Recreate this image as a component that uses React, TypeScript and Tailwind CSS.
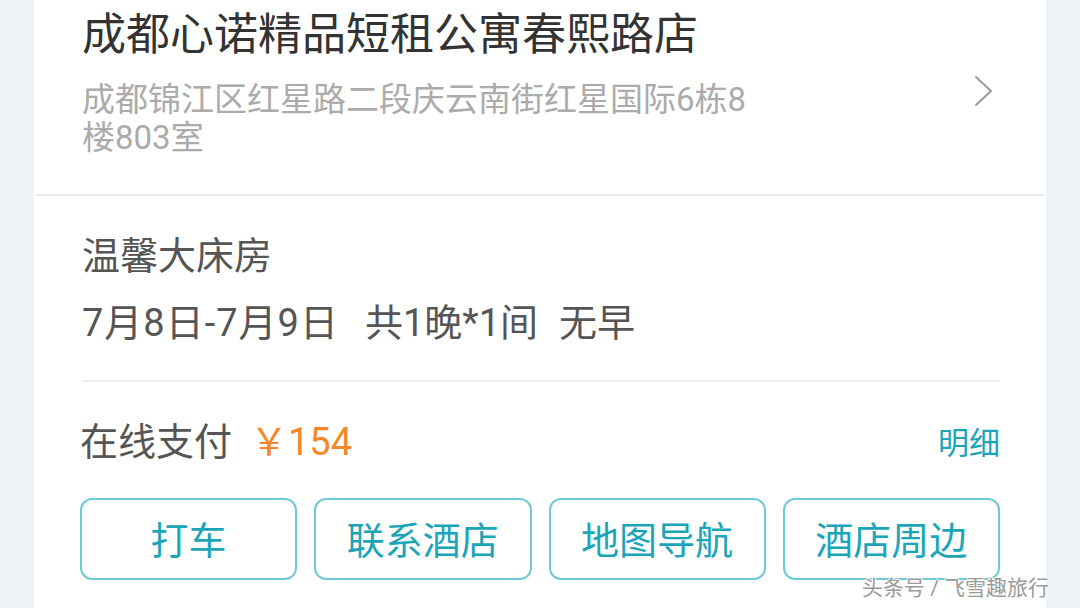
import React from "react";

const font = { fontFamily: "Roboto, 'Noto Sans CJK SC', sans-serif" };

export default function App() {
  const buttons = ["打车", "联系酒店", "地图导航", "酒店周边"];
  return (
    <div
      className="w-[1080px] h-[608px] bg-[#eef3f7] overflow-hidden relative"
      style={font}
    >
      <div className="ml-[34px] w-[1012px] h-[608px] bg-white flex flex-col">
        {/* Section 1 */}
        <div className="flex flex-row pl-[48px] pr-[46px] pt-[9px] pb-[37px]">
          <div className="flex-1 flex flex-col">
            <div className="text-[44px] leading-[52px] text-[#333333] whitespace-nowrap">
              成都心诺精品短租公寓春熙路店
            </div>
            <div className="mt-[20px] w-[690px] text-[33px] leading-[38px] text-[#ababab]">
              成都锦江区红星路二段庆云南街红星国际6栋8楼803室
            </div>
          </div>
          <div className="self-start mt-[66px] mr-[6px]">
            <svg width="20" height="32" viewBox="0 0 20 32" fill="none">
              <path
                d="M2 2 L17 16 L2 30"
                stroke="#9a9a9a"
                strokeWidth="2"
                strokeLinecap="round"
                strokeLinejoin="round"
              />
            </svg>
          </div>
        </div>
        <div className="h-[2px] bg-[#ececec] mx-[2px]" />
        {/* Section 2 */}
        <div className="mx-[46px] ml-[48px] pt-[37px] pb-[34px] border-b-2 border-[#eeeeee]">
          <div className="text-[38px] leading-[46px] text-[#555555]">温馨大床房</div>
          <div className="mt-[21px] text-[38px] leading-[46px] text-[#555555] whitespace-nowrap">
            <span className="tracking-[1px]">7月8日-7月9日</span>
            <span className="ml-[26px]">共1晚*1间</span>
            <span className="ml-[21px]">无早</span>
          </div>
        </div>
        {/* Section 3 */}
        <div className="ml-[46px] mr-[46px] pt-[35px]">
          <div className="flex flex-row items-center justify-between">
            <div className="flex flex-row items-center">
              <span className="text-[38px] leading-[46px] text-[#555555]">在线支付</span>
              <span className="ml-[18px] text-[38px] leading-[46px] text-[#f5872a]">￥154</span>
            </div>
            <span className="text-[31px] leading-[46px] text-[#1ba5b8] mt-[4px]">明细</span>
          </div>
          <div className="mt-[31px] grid grid-cols-4 gap-[17px]">
            {buttons.map((b) => (
              <div
                key={b}
                className="h-[82px] pt-[5px] rounded-[12px] border-2 border-[#6fcad6] flex items-center justify-center text-[38px] text-[#1ba5b8]"
              >
                {b}
              </div>
            ))}
          </div>
        </div>
      </div>
      <div
        className="absolute left-[862px] top-[573px] text-[21px] leading-[30px] text-[#9a9a9a] whitespace-nowrap"
        style={{
          textShadow:
            "1px 0 0 #fff, -1px 0 0 #fff, 0 1px 0 #fff, 0 -1px 0 #fff",
        }}
      >
        头条号 / 飞雪趣旅行
      </div>
    </div>
  );
}
